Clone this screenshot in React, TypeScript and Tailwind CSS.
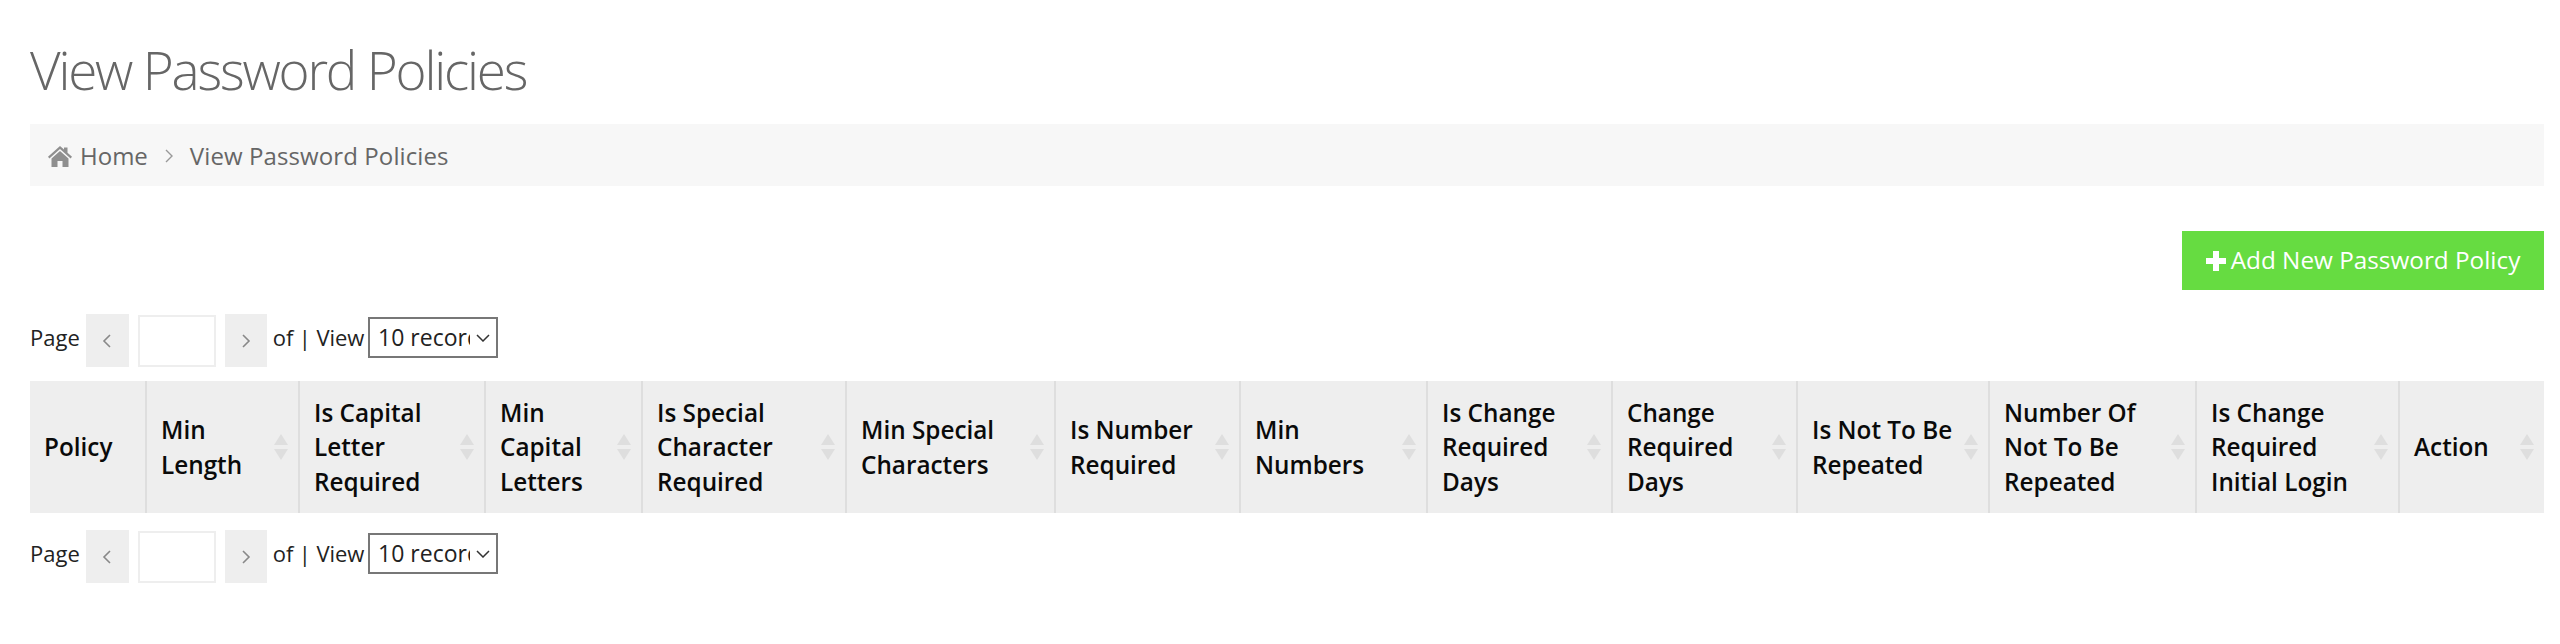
import React from 'react';

const columns = [
  { label: 'Policy', width: 116, sort: false },
  { label: 'Min Length', width: 153, sort: true },
  { label: 'Is Capital Letter Required', width: 186, sort: true },
  { label: 'Min Capital Letters', width: 157, sort: true },
  { label: 'Is Special Character Required', width: 204, sort: true },
  { label: 'Min Special Characters', width: 209, sort: true },
  { label: 'Is Number Required', width: 185, sort: true },
  { label: 'Min Numbers', width: 187, sort: true },
  { label: 'Is Change Required Days', width: 185, sort: true },
  { label: 'Change Required Days', width: 185, sort: true },
  { label: 'Is Not To Be Repeated', width: 192, sort: true },
  { label: 'Number Of Not To Be Repeated', width: 207, sort: true },
  { label: 'Is Change Required Initial Login', width: 203, sort: true },
  { label: 'Action', width: 145, sort: true },
];

const SortIcon = () => (
  <svg width="14" height="26" viewBox="0 0 14 26" className="absolute right-[10px] top-1/2 -translate-y-1/2" fill="#dedede">
    <path d="M7 0 L14 11 L0 11 Z" />
    <path d="M0 15 L14 15 L7 26 Z" />
  </svg>
);

const Chevron = ({ dir }: { dir: 'left' | 'right' }) => (
  <svg width="10" height="16" viewBox="0 0 10 16" fill="none" stroke="#888" strokeWidth="1.6">
    <path d={dir === 'left' ? 'M8 2 L2 8 L8 14' : 'M2 2 L8 8 L2 14'} />
  </svg>
);

const Pager = () => (
  <div className="flex items-center h-[53px] text-[22px] text-[#222]">
    <span className="mr-[6px] -mt-[6px]">Page</span>
    <button className="w-[43px] h-[53px] bg-[#eeeeee] flex items-center justify-center">
      <Chevron dir="left" />
    </button>
    <input className="w-[78px] h-[52px] mx-[9px] border-2 border-[#eeeeee] bg-white" />
    <button className="w-[42px] h-[53px] bg-[#eeeeee] flex items-center justify-center">
      <Chevron dir="right" />
    </button>
    <span className="ml-[6px] mr-[4px] -mt-[6px] tracking-[-0.1px]">of | View</span>
    <div className="w-[130px] h-[41px] -mt-[6px] border-2 border-[#777] bg-white flex items-center pl-[8px] pr-[6px]">
      <span className="w-[92px] overflow-hidden whitespace-nowrap text-[23px]">10 records</span>
      <svg width="14" height="8" viewBox="0 0 14 8" fill="none" stroke="#333" strokeWidth="1.5" className="ml-[6px]">
        <path d="M1 1 L7 7 L13 1" />
      </svg>
    </div>
  </div>
);

export default function App() {
  return (
    <div className="min-h-[644px] bg-white pl-[30px] pr-[16px] pt-[36px] font-['Open_Sans',sans-serif]">
      <h1 className="text-[53px] leading-[68px] font-light text-[#666666] tracking-[-2.2px]">View Password Policies</h1>

      <div className="mt-[20px] h-[62px] bg-[#f7f7f7] flex items-center pl-[18px] pt-[2px] text-[24px] text-[#666666]">
        <svg width="24" height="21" viewBox="0 0 24 21" fill="#8f8f8f">
          <path d="M12 0 L16 3.6 V1.5 H19.5 V6.8 L24 10.8 L22.6 12.4 L12 3 L1.4 12.4 L0 10.8 Z" />
          <path d="M12 5 L20.5 12.5 V21 H14.5 V15 H9.5 V21 H3.5 V12.5 Z" />
        </svg>
        <span className="ml-[8px]">Home</span>
        <svg width="10" height="16" viewBox="0 0 10 16" fill="none" stroke="#999" strokeWidth="1.4" className="mx-[16px]">
          <path d="M2 2 L8 8 L2 14" />
        </svg>
        <span className="tracking-[0.1px]">View Password Policies</span>
      </div>

      <div className="mt-[45px] flex justify-end">
        <button className="w-[362px] h-[59px] bg-[#66dc41] text-white text-[24.3px] flex items-center justify-center">
          <svg width="20" height="20" viewBox="0 0 20 20" fill="white" className="mr-[5px]">
            <path d="M7 0 H13 V7 H20 V13 H13 V20 H7 V13 H0 V7 H7 Z" />
          </svg>
          Add New Password Policy
        </button>
      </div>

      <div className="mt-[24px]"><Pager /></div>

      <table className="mt-[14px] w-[2514px] table-fixed border-collapse">
        <thead>
          <tr className="h-[132px] bg-[#eeeeee]">
            {columns.map((c, i) => (
              <th
                key={c.label}
                style={{ width: c.width }}
                className={`relative pl-[14px] pr-[30px] pt-[1px] text-left align-middle text-[24.3px] leading-[34.28px] font-semibold text-[#0a0a0a] ${i < columns.length - 1 ? 'border-r-2 border-[#dedede]' : ''}`}
              >
                {c.label}
                {c.sort && <SortIcon />}
              </th>
            ))}
          </tr>
        </thead>
      </table>

      <div className="mt-[17px]"><Pager /></div>
    </div>
  );
}
